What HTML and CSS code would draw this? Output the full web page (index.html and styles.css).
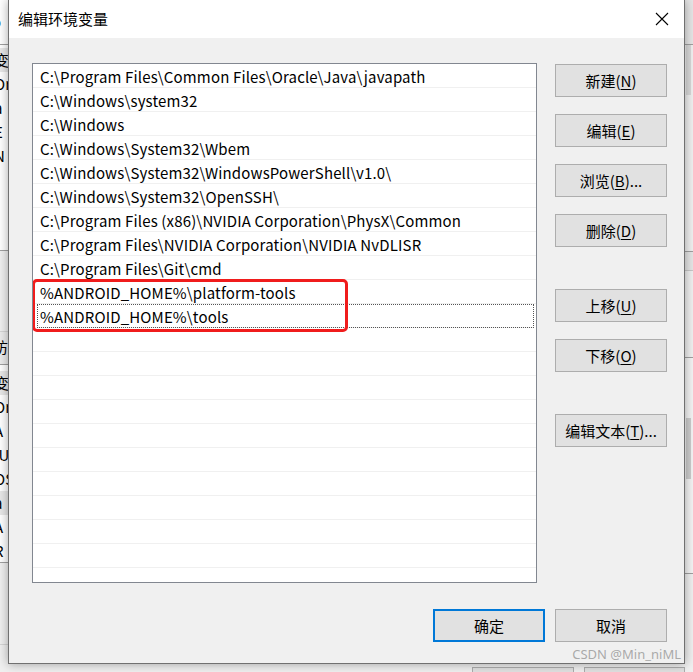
FILE: index.html
```html
<!DOCTYPE html>
<html lang="zh-CN">
<head>
<meta charset="utf-8">
<title>编辑环境变量</title>
<link rel="stylesheet" href="styles.css">
</head>
<body>
<div class="screen">
  <div class="strip-left">
    <div class="bl-top"><span class="cut">o</span></div>
    <div class="bl-list">
      <div class="bl-row sel"><span class="cut">变</span></div>
      <div class="bl-row"><span class="cut">Or</span></div>
      <div class="bl-row"><span class="cut">a</span></div>
      <div class="bl-row"><span class="cut">E</span></div>
      <div class="bl-row"><span class="cut">N</span></div>
    </div>
    <div class="bl-gap"></div>
    <div class="bl-head"><span class="cut">访</span></div>
    <div class="bl-list2">
      <div class="bl-row sel"><span class="cut">变</span></div>
      <div class="bl-row"><span class="cut">Or</span></div>
      <div class="bl-row"><span class="cut">A</span></div>
      <div class="bl-row"><span class="cut">IU</span></div>
      <div class="bl-row"><span class="cut">OS</span></div>
      <div class="bl-row sel"><span class="cut">a</span></div>
      <div class="bl-row"><span class="cut">A</span></div>
      <div class="bl-row"><span class="cut">R</span></div>
    </div>
    <div class="bl-gap2"></div>
  </div>

  <div class="dialog">
    <div class="titlebar">
      <span class="title">编辑环境变量</span>
      <svg class="close" width="14" height="14" viewBox="0 0 14 14"><path d="M1 1 L13 13 M13 1 L1 13" stroke="#000" stroke-width="1.1" fill="none"/></svg>
    </div>
    <div class="content">
      <div class="listbox">
        <div class="row">C:\Program Files\Common Files\Oracle\Java\javapath</div>
        <div class="row">C:\Windows\system32</div>
        <div class="row">C:\Windows</div>
        <div class="row">C:\Windows\System32\Wbem</div>
        <div class="row">C:\Windows\System32\WindowsPowerShell\v1.0\</div>
        <div class="row">C:\Windows\System32\OpenSSH\</div>
        <div class="row">C:\Program Files (x86)\NVIDIA Corporation\PhysX\Common</div>
        <div class="row">C:\Program Files\NVIDIA Corporation\NVIDIA NvDLISR</div>
        <div class="row">C:\Program Files\Git\cmd</div>
        <div class="row">%ANDROID_HOME%\platform-tools</div>
        <div class="row focus">%ANDROID_HOME%\tools</div>
        <div class="row"></div>
        <div class="row"></div>
        <div class="row"></div>
        <div class="row"></div>
        <div class="row"></div>
        <div class="row"></div>
        <div class="row"></div>
        <div class="row"></div>
        <div class="row"></div>
        <div class="row"></div>
        <div class="row"></div>
        <div class="mark"></div>
      </div>
      <div class="side">
        <div class="group">
          <button class="btn">新建(<u>N</u>)</button>
          <button class="btn">编辑(<u>E</u>)</button>
          <button class="btn">浏览(<u>B</u>)...</button>
          <button class="btn">删除(<u>D</u>)</button>
        </div>
        <div class="group">
          <button class="btn">上移(<u>U</u>)</button>
          <button class="btn">下移(<u>O</u>)</button>
        </div>
        <div class="group">
          <button class="btn">编辑文本(<u>T</u>)...</button>
        </div>
      </div>
    </div>
    <div class="footer">
      <button class="btn default">确定</button>
      <button class="btn">取消</button>
    </div>
  </div>

  <div class="strip-right">
    <div class="br-top"></div>
    <div class="br-scroll"></div>
    <div class="br-mid"></div>
    <div class="br-sec"></div>
    <div class="br-mid2"></div>
    <div class="br-list"><div class="br-thumb"></div></div>
    <div class="br-rest"></div>
  </div>

  <div class="strip-bottom">
    <div class="bb-btn"></div>
    <div class="bb-btn"></div>
  </div>
</div>
<div class="watermark">CSDN @Min_niML</div>
</body>
</html>
```

FILE: styles.css
```css
* { box-sizing: border-box; }
html, body { margin: 0; padding: 0; }
body {
  width: 693px;
  height: 672px;
  overflow: hidden;
  background: #f0f0f0;
  font-family: "Noto Sans CJK SC", "Noto Sans", sans-serif;
  font-size: 15px;
  color: #000;
  position: relative;
}
.screen {
  display: grid;
  grid-template-columns: 8px 677px 8px;
  grid-template-rows: 664px 8px;
  width: 693px;
  height: 672px;
}

/* background window, left */
.strip-left {
  grid-column: 1;
  grid-row: 1 / 3;
  overflow: hidden;
  display: flex;
  flex-direction: column;
  background: #f0f0f0;
  font-size: 15px;
  line-height: 24px;
  color: #000;
}
.cut { display: block; white-space: nowrap; }
.bl-top {
  height: 45px;
  background: #fff;
  border-bottom: 1px solid #a0a0a0;
  padding-top: 10px;
}
.bl-top .cut { margin-left: -8px; }
.bl-list { background: #fff; height: 206px; padding-top: 3px; border-bottom: 1px solid #a0a0a0; }
.bl-row { height: 24px; }
.bl-row .cut { margin-left: -6px; }
.bl-row.sel { background: #e8e8e8; }
.bl-gap { height: 81px; border-bottom: 1px solid #d6d6d6; }
.bl-head { height: 33px; background: #ececec; border-bottom: 1px solid #a0a0a0; padding-top: 3px; }
.bl-head .cut { margin-left: -7px; }
.bl-list2 { background: #fff; height: 198px; padding-top: 6px; overflow: hidden; border-bottom: 1px solid #a0a0a0; }
.bl-gap2 { height: 82px; border-bottom: 1px solid #d6d6d6; }

/* dialog */
.dialog {
  grid-column: 2;
  grid-row: 1;
  display: flex;
  flex-direction: column;
  background: #f0f0f0;
  border-left: 1px solid #707070;
  border-right: 1px solid #707070;
  border-bottom: 1px solid #707070;
  box-shadow: 0 0 10px rgba(0, 0, 0, 0.35);
  position: relative;
  z-index: 2;
}
.titlebar {
  height: 38px;
  background: #fff;
  display: flex;
  align-items: center;
  justify-content: space-between;
  padding: 0 15px 0 9px;
  flex: none;
}
.title { font-size: 15px; line-height: 20px; }
.close { display: block; }

.content {
  display: flex;
  padding: 25px 17px 0 23px;
  gap: 18px;
  flex: none;
}
.listbox {
  width: 505px;
  height: 520px;
  border: 1px solid #828790;
  background: #fff;
  overflow: hidden;
  position: relative;
}
.row {
  height: 24px;
  border-bottom: 1px solid #f0f0f0;
  padding: 1px 0 0 7px;
  line-height: 23px;
  white-space: nowrap;
  font-size: 15px;
  letter-spacing: 0.15px;
}
.row.focus {
  outline: 1px dotted #555;
  outline-offset: -1px;
  margin: 0 2px 0 4px;
  padding-left: 3px;
}
.mark {
  position: absolute;
  left: -1px;
  top: 215px;
  width: 316px;
  height: 53px;
  border: 3px solid #f01c1c;
  border-radius: 5px;
}

.side {
  display: flex;
  flex-direction: column;
  gap: 42px;
  padding-top: 1px;
}
.group {
  display: flex;
  flex-direction: column;
  gap: 17px;
}
.btn {
  width: 112px;
  height: 33px;
  background: #e1e1e1;
  border: 1px solid #adadad;
  font-family: "Noto Sans CJK SC", "Noto Sans", sans-serif;
  font-size: 15px;
  color: #000;
  padding: 0;
  line-height: 20px;
}
.btn u { text-underline-offset: 2px; }
.btn.default { border: 2px solid #0078d7; }

.footer {
  display: flex;
  justify-content: flex-end;
  gap: 10px;
  padding: 26px 17px 0 0;
}

/* background window, right */
.strip-right {
  grid-column: 3;
  grid-row: 1 / 3;
  display: flex;
  flex-direction: column;
  background: #f0f0f0;
}
.br-top { height: 45px; background: #e6e6e6; border-bottom: 1px solid #a0a0a0; }
.br-scroll { height: 50px; background: #f0f0f0; border-left: 5px solid #d9d9d9; margin-left: 1px; }
.br-mid { height: 157px; border-bottom: 1px solid #a0a0a0; }
.br-sec { height: 19px; background: #e6e6e6; border-bottom: 1px solid #c8c8c8; }
.br-mid2 { height: 87px; border-bottom: 1px solid #a0a0a0; }
.br-list { height: 216px; background: #f4f4f4; border-bottom: 1px solid #a0a0a0; padding-top: 60px; }
.br-thumb { width: 5px; height: 61px; margin-left: 1px; background: #cdcdcd; }
.br-rest { flex: 1; }

.strip-bottom {
  grid-column: 2;
  grid-row: 2;
  display: flex;
  gap: 10px;
  padding: 3px 0 0 464px;
}
.bb-btn {
  width: 111px;
  height: 10px;
  border: 1px solid #adadad;
  background: #e1e1e1;
}

.watermark {
  position: absolute;
  right: 12px;
  top: 645px;
  font-family: "Noto Sans", "Liberation Sans", sans-serif;
  font-size: 13px;
  color: rgba(150, 150, 150, 0.8);
  z-index: 5;
  white-space: nowrap;
}
```
